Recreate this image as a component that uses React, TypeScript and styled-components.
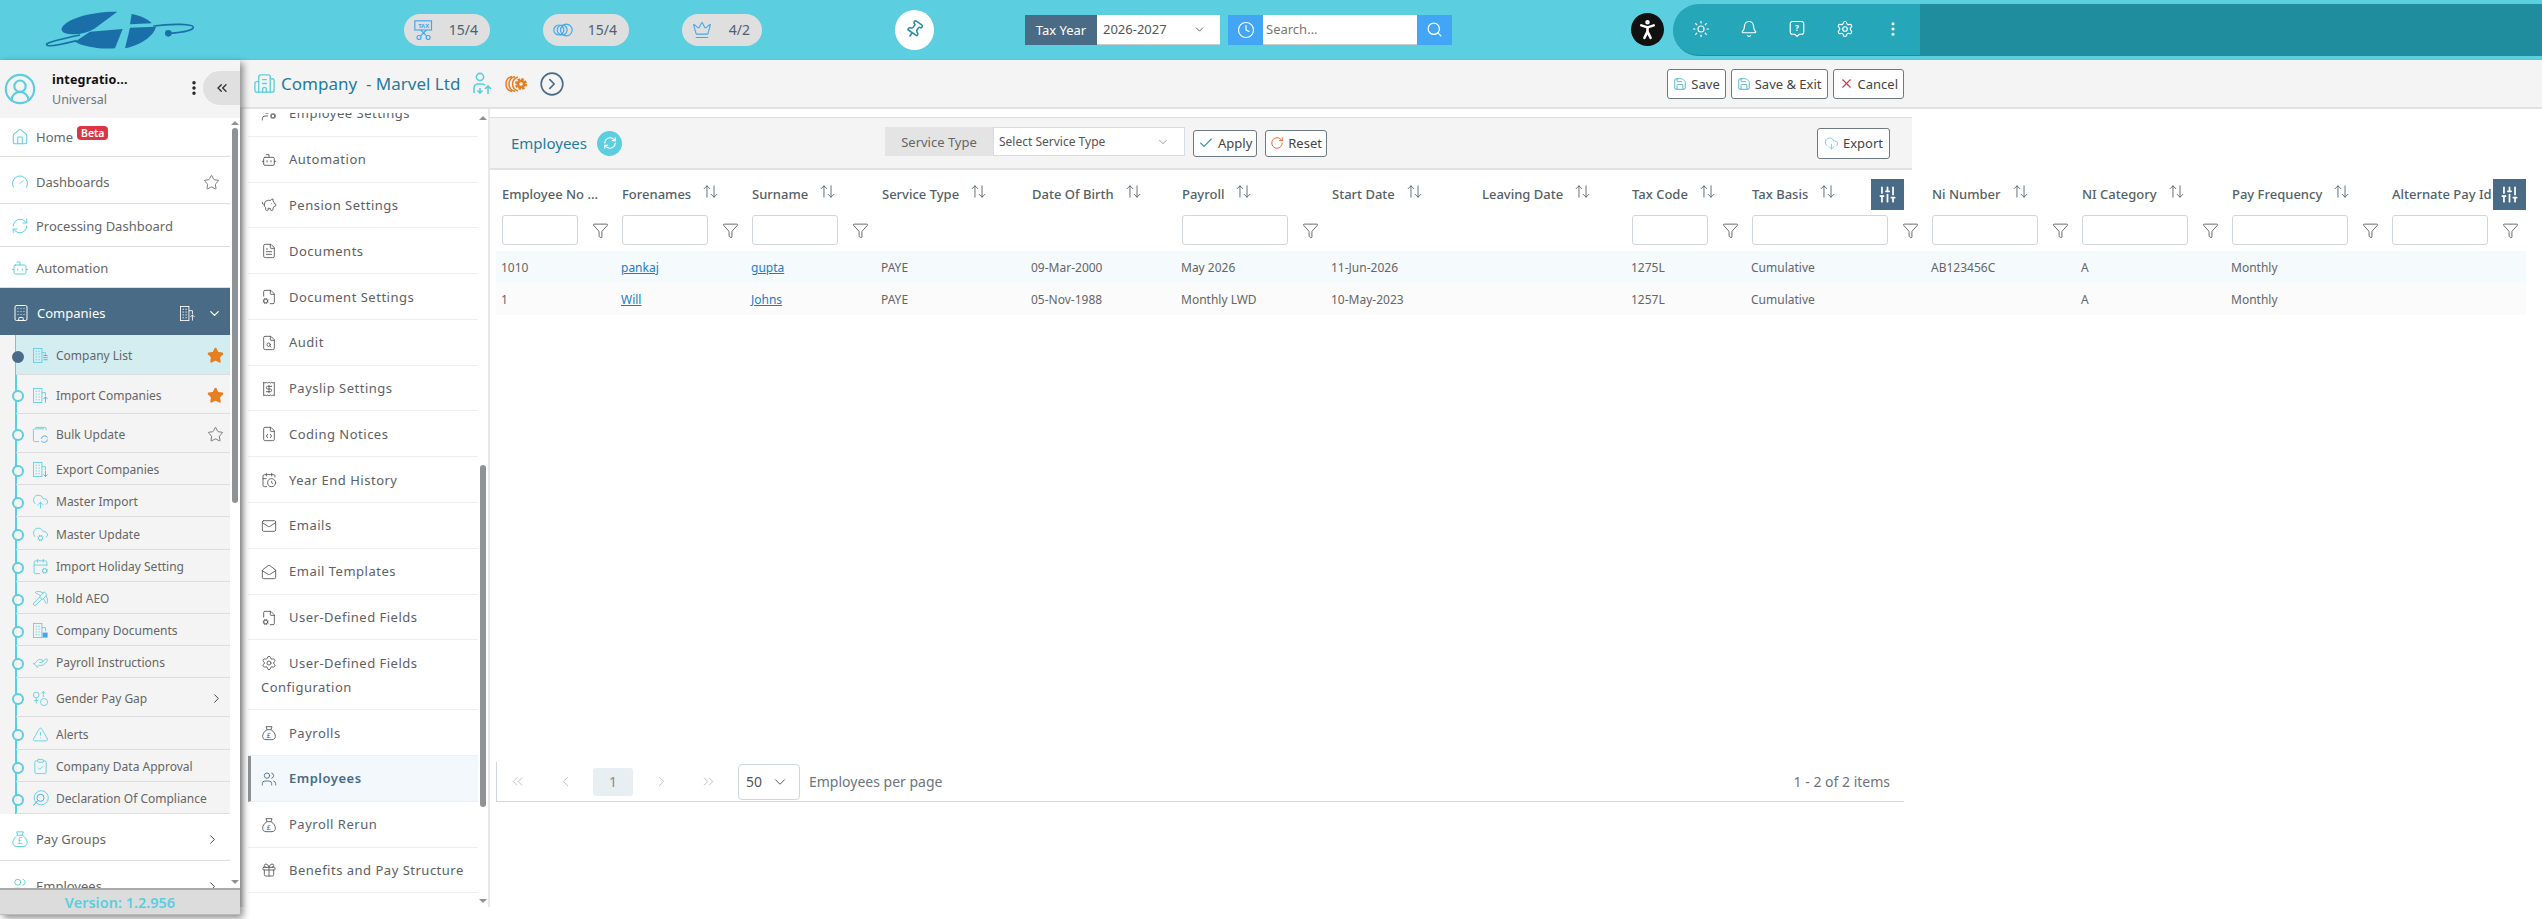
import type { ComponentType, ReactNode } from "react";
import styled, { createGlobalStyle } from "styled-components";
import {
  ArrowUpDown,
  Bell,
  Bot,
  Building,
  Building2,
  CalendarClock,
  CalendarCog,
  Check,
  ChevronDown,
  ChevronLeft,
  ChevronRight,
  ChevronsLeft,
  ChevronsRight,
  CircleChevronRight,
  CircleUserRound,
  ClipboardCheck,
  Clock,
  CloudCog,
  CloudDownload,
  CloudUpload,
  Crown,
  EllipsisVertical,
  FileCode,
  FileCog,
  FileSearch,
  FileText,
  Funnel,
  Gauge,
  Gift,
  HandHelping,
  House,
  Mail,
  MailOpen,
  PersonStanding,
  Pickaxe,
  PiggyBank,
  Pin,
  Receipt,
  RefreshCw,
  RotateCw,
  Save,
  Scale,
  Search,
  Settings,
  SlidersVertical,
  Star,
  Sun,
  TriangleAlert,
  UserCog,
  Users,
  X,
} from "lucide-react";

type IconProps = { size?: number; strokeWidth?: number; color?: string };
type IconType = ComponentType<IconProps>;

const GlobalStyle = createGlobalStyle`
  html, body {
    margin: 0;
    background: #fff;
    height: 919px;
    overflow: hidden;
  }
  * { box-sizing: border-box; }
  body {
    font-family: "Noto Sans", "Open Sans", sans-serif;
    color: #555;
  }
`;

/* small drawn icons the packages don't have */
const Logo = () => (
  <svg width="180" height="60" viewBox="0 0 540 180" fill="#1b6fa8">
    <path d="M95 85C105 60 170 35 262 35L195 85C175 98 150 104 125 103C105 102 93 97 95 85Z" />
    <path d="M305 42C335 48 355 58 365 70L300 73Z" />
    <path d="M135 125L180 95L278 87L255 145C210 148 160 140 135 125Z" />
    <path d="M300 83L378 80C370 110 330 135 285 145Z" />
    <path
      d="M150 105C90 118 45 128 50 135C55 142 100 132 140 122M370 78C430 70 490 72 490 82C490 92 450 98 418 100"
      fill="none"
      stroke="#1b6fa8"
      strokeWidth="5"
    />
    <circle cx="415" cy="100" r="10" />
  </svg>
);

const TaxCut = ({ size = 20 }: IconProps) => (
  <svg width={size} height={size} viewBox="0 0 24 24" fill="none" stroke="#3ea8f5" strokeWidth="1.4">
    <rect x="1" y="1" width="20" height="11" />
    <text x="5" y="9.500" fontSize="7" fontWeight="700" fill="#3ea8f5" stroke="none">
      TAX
    </text>
    <path d="M8 12l7 7M15 12l-7 7" />
    <circle cx="6" cy="21" r="2.400" />
    <circle cx="17" cy="21" r="2.400" />
  </svg>
);

const Rings = ({ size = 20 }: IconProps) => (
  <svg width={size} height={size} viewBox="0 0 24 24" fill="none" stroke="#3ea8f5" strokeWidth="1.4">
    <circle cx="7" cy="12" r="6" />
    <circle cx="11" cy="12" r="6" />
    <circle cx="16" cy="12" r="7" />
  </svg>
);

const HelpBox = ({ size = 18 }: IconProps) => (
  <svg width={size} height={size} viewBox="0 0 24 24" fill="none" stroke="#fff" strokeWidth="1.6">
    <path d="M6 2h12a3 3 0 0 1 3 3v11a3 3 0 0 1-3 3h-3l-3 3-3-3H6a3 3 0 0 1-3-3V5a3 3 0 0 1 3-3z" />
    <text x="12" y="15" fontSize="11" fontWeight="700" fill="#fff" stroke="none" textAnchor="middle">
      ?
    </text>
  </svg>
);

const PersonArrows = () => (
  <svg width="22" height="23" viewBox="0 0 22 23" fill="none" stroke="#5bcedf" strokeWidth="1.6">
    <circle cx="8" cy="5" r="3.600" />
    <path d="M2 21v-5a4 4 0 0 1 4-4h4a4 4 0 0 1 3 1.300" />
    <path d="M8 21v-5M5.500 18.500L8 21l2.500-2.500" />
    <path d="M16 22v-8M13 17l3-3 3 3" />
  </svg>
);

const RingsGear = () => (
  <svg width="23" height="20" viewBox="0 0 23 20" fill="none" stroke="#e67e22" strokeWidth="1.5">
    <path d="M7 2.500C3 3.500 1 6.500 1 10s2 6.500 6 7.500M10 2.500C6 3.500 4 6.500 4 10s2 6.500 6 7.500M13 3C10 4 7.500 6.500 7.500 10s2.500 6 5.500 7" />
    <circle cx="16" cy="10" r="4.500" fill="#e67e22" stroke="#e67e22" strokeWidth="3" strokeDasharray="2.200 1.300" />
    <circle cx="16" cy="10" r="1.800" fill="#f4f4f4" stroke="none" />
  </svg>
);

const makeBuilding = (mark: "lines" | "up" | "down" | "doc") => {
  const BuildingMark = ({ size = 17, color = "#5bcedf" }: IconProps) => {
    const accent = color === "#fff" ? "#fff" : "#3ea8f5";
    return (
      <svg width={size} height={size} viewBox="0 0 24 24" fill="none" stroke={color} strokeWidth="1.2">
        <rect x="2" y="2" width="12" height="20" />
        <path d="M14 8h5v5M5 6h2M9 6h2M5 10h2M9 10h2M5 14h2M9 14h2M5 18h2M9 18h2" />
        {mark === "lines" && <path d="M16 12h6M16 15h6M16 18h6" stroke={accent} />}
        {mark === "up" && <path d="M19 22V14M16 17l3-3 3 3" stroke={accent} />}
        {mark === "down" && <path d="M19 14v8M16 19l3 3 3-3" stroke={accent} />}
        {mark === "doc" && <rect x="15" y="15" width="7" height="7" fill={accent} stroke="none" />}
      </svg>
    );
  };
  return BuildingMark;
};

const BuildingUp = makeBuilding("up");

const MoneyBag = ({ size = 17, color = "#555" }: IconProps) => (
  <svg width={size} height={size} viewBox="0 0 24 24" fill="none" stroke={color} strokeWidth="1.3">
    <path d="M9 7L7.500 2.500h9L15 7M9 7h6M9 7C4 10 2.500 14 2.500 17c0 3 2 5 5 5h9c3 0 5-2 5-5 0-3-1.500-7-6.500-10" />
    <text x="12" y="19" fontSize="11" fill={color} stroke="none" textAnchor="middle">
      £
    </text>
  </svg>
);

const GenderGap = ({ size = 17, color = "#5bcedf" }: IconProps) => (
  <svg width={size} height={size} viewBox="0 0 24 24" fill="none" stroke={color} strokeWidth="1.2">
    <circle cx="6" cy="7" r="4" />
    <path d="M6 11v8M3 15h6" />
    <path d="M16 2v8M13 5l3-3 3 3" />
    <circle cx="17" cy="17" r="5" />
  </svg>
);

const LayersSync = ({ size = 17, color = "#5bcedf" }: IconProps) => (
  <svg width={size} height={size} viewBox="0 0 24 24" fill="none" stroke={color} strokeWidth="1.2">
    <path d="M20 6V4a2 2 0 0 0-2-2H5M10 22H4a2 2 0 0 1-2-2V6a2 2 0 0 1 2-2h13" />
    <path d="M13 18a5 5 0 0 1 9-2M22 19a5 5 0 0 1-9 2" stroke="#3ea8f5" />
  </svg>
);

const SearchRing = ({ size = 17, color = "#5bcedf" }: IconProps) => (
  <svg width={size} height={size} viewBox="0 0 24 24" fill="none" stroke={color} strokeWidth="1.3">
    <circle cx="13" cy="11" r="10" />
    <circle cx="12" cy="11" r="5" stroke="#3ea8f5" />
    <path d="M8 15l-6 7" stroke="#3ea8f5" />
  </svg>
);

const subItems: { label: string; height: number; icon: IconType; star?: "on" | "off"; more?: boolean; active?: boolean }[] = [
  { label: "Company List", height: 40, icon: makeBuilding("lines"), star: "on", active: true },
  { label: "Import Companies", height: 39, icon: makeBuilding("up"), star: "on" },
  { label: "Bulk Update", height: 39, icon: LayersSync, star: "off" },
  { label: "Export Companies", height: 32, icon: makeBuilding("down") },
  { label: "Master Import", height: 32, icon: CloudUpload },
  { label: "Master Update", height: 33, icon: CloudCog },
  { label: "Import Holiday Setting", height: 32, icon: CalendarCog },
  { label: "Hold AEO", height: 32, icon: Pickaxe },
  { label: "Company Documents", height: 32, icon: makeBuilding("doc") },
  { label: "Payroll Instructions", height: 32, icon: HandHelping },
  { label: "Gender Pay Gap", height: 39, icon: GenderGap, more: true },
  { label: "Alerts", height: 33, icon: TriangleAlert },
  { label: "Company Data Approval", height: 32, icon: ClipboardCheck },
  { label: "Declaration Of Compliance", height: 32, icon: SearchRing },
];

const sectionItems: { label: string; icon: IconType; active?: boolean }[] = [
  { label: "Employee Settings", icon: UserCog },
  { label: "Automation", icon: Bot },
  { label: "Pension Settings", icon: PiggyBank },
  { label: "Documents", icon: FileText },
  { label: "Document Settings", icon: FileCog },
  { label: "Audit", icon: FileSearch },
  { label: "Payslip Settings", icon: Receipt },
  { label: "Coding Notices", icon: FileCode },
  { label: "Year End History", icon: CalendarClock },
  { label: "Emails", icon: Mail },
  { label: "Email Templates", icon: MailOpen },
  { label: "User-Defined Fields", icon: FileCog },
  { label: "User-Defined Fields Configuration", icon: Settings },
  { label: "Payrolls", icon: MoneyBag },
  { label: "Employees", icon: Users, active: true },
  { label: "Payroll Rerun", icon: MoneyBag },
  { label: "Benefits and Pay Structure", icon: Gift },
  { label: "Benefit Plan Rules", icon: Scale },
];

const columns: { label: string; width: number; filter?: boolean; noSort?: boolean }[] = [
  { label: "Employee No ...", width: 120, filter: true, noSort: true },
  { label: "Forenames", width: 130, filter: true },
  { label: "Surname", width: 130, filter: true },
  { label: "Service Type", width: 150 },
  { label: "Date Of Birth", width: 150 },
  { label: "Payroll", width: 150, filter: true },
  { label: "Start Date", width: 150 },
  { label: "Leaving Date", width: 150 },
  { label: "Tax Code", width: 120, filter: true },
  { label: "Tax Basis", width: 180, filter: true },
  { label: "Ni Number", width: 150, filter: true },
  { label: "NI Category", width: 150, filter: true },
  { label: "Pay Frequency", width: 160, filter: true },
  { label: "Alternate Pay Id", width: 140, filter: true, noSort: true },
];

const rows: ReactNode[][] = [
  ["1010", <a key="f">pankaj</a>, <a key="s">gupta</a>, "PAYE", "09-Mar-2000", "May 2026", "11-Jun-2026", "", "1275L", "Cumulative", "AB123456C", "A", "Monthly", ""],
  ["1", <a key="f">Will</a>, <a key="s">Johns</a>, "PAYE", "05-Nov-1988", "Monthly LWD", "10-May-2023", "", "1257L", "Cumulative", "", "A", "Monthly", ""],
];

export default function App() {
  return (
    <Page>
      <GlobalStyle />
      <Header>
        <LogoBox>
          <Logo />
        </LogoBox>
        <Stats>
          <StatPill $width={86}>
            <TaxCut size={20} />
            15/4
          </StatPill>
          <StatPill $width={86}>
            <Rings size={20} />
            15/4
          </StatPill>
          <StatPill $width={80}>
            <Crown size={20} strokeWidth={1.3} color="#3ea8f5" />
            4/2
          </StatPill>
        </Stats>
        <PinButton>
          <Pin size={19} strokeWidth={2} color="#2a8fa0" />
        </PinButton>
        <TaxYear>
          <TaxLabel>Tax Year</TaxLabel>
          <TaxSelect>
            2026-2027
            <ChevronDown size={13} strokeWidth={1.6} color="#555" />
          </TaxSelect>
        </TaxYear>
        <SearchGroup>
          <BlueSquare $width={35}>
            <Clock size={18} strokeWidth={1.6} color="#fff" />
          </BlueSquare>
          <SearchBox>Search...</SearchBox>
          <BlueSquare $width={35}>
            <Search size={17} strokeWidth={1.8} color="#fff" />
          </BlueSquare>
        </SearchGroup>
        <A11yButton>
          <PersonStanding size={25} strokeWidth={2.4} color="#fff" />
        </A11yButton>
        <Tray>
          <TrayIcons>
            <Sun size={18} strokeWidth={1.6} color="#fff" />
            <Bell size={18} strokeWidth={1.6} color="#fff" />
            <HelpBox size={18} />
            <Settings size={18} strokeWidth={1.6} color="#fff" />
            <EllipsisVertical size={18} strokeWidth={2.2} color="#fff" />
          </TrayIcons>
          <TrayRest />
        </Tray>
      </Header>

      <Body>
        <Sidebar>
          <UserBlock>
            <CircleUserRound size={34} strokeWidth={1.5} color="#5bcedf" />
            <UserText>
              <UserName>integratio...</UserName>
              <UserRole>Universal</UserRole>
            </UserText>
            <EllipsisVertical size={18} strokeWidth={2.6} color="#222" />
            <CollapseTab>
              <ChevronsLeft size={16} strokeWidth={2} color="#333" />
            </CollapseTab>
          </UserBlock>
          <SideScroll>
            <NavList>
              <NavItem $height={39}>
                <House size={18} strokeWidth={1.4} color="#5bcedf" />
                Home
                <Beta>Beta</Beta>
              </NavItem>
              <NavItem $height={47} $nudge={4}>
                <Gauge size={18} strokeWidth={1.3} color="#5bcedf" />
                Dashboards
                <Trailing>
                  <Star size={17} strokeWidth={1.2} color="#666" />
                </Trailing>
              </NavItem>
              <NavItem $height={43} $nudge={2}>
                <RefreshCw size={18} strokeWidth={1.3} color="#5bcedf" />
                Processing Dashboard
              </NavItem>
              <NavItem $height={41} $nudge={2}>
                <Bot size={18} strokeWidth={1.3} color="#5bcedf" />
                Automation
              </NavItem>
              <CompaniesRow>
                <Building size={18} strokeWidth={1.3} color="#fff" />
                Companies
                <CompanyTools>
                  <BuildingUp size={17} color="#fff" />
                  <ChevronDown size={15} strokeWidth={2} color="#fff" />
                </CompanyTools>
              </CompaniesRow>
              <SubList>
                {subItems.map((item) => {
                  const Glyph = item.icon;
                  return (
                    <SubItem key={item.label} $height={item.height} $active={item.active}>
                      <Glyph size={17} strokeWidth={1.2} color="#5bcedf" />
                      {item.label}
                      {item.star && (
                        <SubTrail>
                          {item.star === "on" ? (
                            <Star size={17} fill="#e67e22" color="#e67e22" />
                          ) : (
                            <Star size={17} strokeWidth={1.2} color="#666" />
                          )}
                        </SubTrail>
                      )}
                      {item.more && (
                        <SubTrail>
                          <ChevronRight size={15} strokeWidth={1.6} color="#444" />
                        </SubTrail>
                      )}
                    </SubItem>
                  );
                })}
              </SubList>
              <NavItem $height={47} $nudge={4}>
                <MoneyBag size={18} color="#5bcedf" />
                Pay Groups
                <Trailing>
                  <ChevronRight size={15} strokeWidth={1.6} color="#444" />
                </Trailing>
              </NavItem>
              <NavItem $height={47} $nudge={4}>
                <Users size={18} strokeWidth={1.3} color="#5bcedf" />
                Employees
                <Trailing>
                  <ChevronRight size={15} strokeWidth={1.6} color="#444" />
                </Trailing>
              </NavItem>
            </NavList>
            <ScrollTrack $width={10}>
              <UpArrow />
              <Thumb $top={3} $height={375} />
              <DownArrow />
            </ScrollTrack>
          </SideScroll>
          <Version>Version: 1.2.956</Version>
        </Sidebar>

        <Workspace>
          <TopBar>
            <Building2 size={23} strokeWidth={1.4} color="#5bcedf" />
            <PageTitle>Company &nbsp;- Marvel Ltd</PageTitle>
            <TitleIcons>
              <PersonArrows />
              <RingsGear />
              <CircleChevronRight size={26} strokeWidth={1.5} color="#4a6b85" />
            </TitleIcons>
            <TopActions>
              <OutlineButton>
                <Save size={14} strokeWidth={1.4} color="#3aa9bb" />
                Save
              </OutlineButton>
              <OutlineButton>
                <Save size={14} strokeWidth={1.4} color="#3aa9bb" />
                Save &amp; Exit
              </OutlineButton>
              <OutlineButton>
                <X size={15} strokeWidth={1.8} color="#dc3545" />
                Cancel
              </OutlineButton>
            </TopActions>
          </TopBar>

          <WorkRow>
            <SectionNav>
              <SectionList>
                <SectionInner>
                  {sectionItems.map((item) => {
                    const Icon = item.icon;
                    return (
                      <SectionItem key={item.label} $active={item.active}>
                        <SectionIcon>
                          <Icon size={16} strokeWidth={1.3} color={item.active ? "#4a6b85" : "#555"} />
                        </SectionIcon>
                        {item.label}
                      </SectionItem>
                    );
                  })}
                </SectionInner>
              </SectionList>
              <ScrollTrack $width={8}>
                <UpArrow />
                <Thumb $top={345} $height={342} />
                <DownArrow />
              </ScrollTrack>
            </SectionNav>

            <Main>
              <CardHeader>
                <CardTitle>Employees</CardTitle>
                <RefreshDot>
                  <RefreshCw size={14} strokeWidth={2} color="#fff" />
                </RefreshDot>
                <FilterGroup>
                  <FilterLabel>Service Type</FilterLabel>
                  <FilterSelect>
                    Select Service Type
                    <ChevronDown size={14} strokeWidth={1.2} color="#777" />
                  </FilterSelect>
                  <SmallButton>
                    <Check size={16} strokeWidth={1.6} color="#2a8fa0" />
                    Apply
                  </SmallButton>
                  <SmallButton>
                    <RotateCw size={14} strokeWidth={1.6} color="#e8622a" />
                    Reset
                  </SmallButton>
                </FilterGroup>
                <ExportButton>
                  <CloudDownload size={15} strokeWidth={1.3} color="#5bcedf" />
                  Export
                </ExportButton>
              </CardHeader>

              <TableWrap>
                <Grid>
                  <colgroup>
                    {columns.map((col) => (
                      <col key={col.label} width={col.width} />
                    ))}
                  </colgroup>
                  <thead>
                    <tr>
                      {columns.map((col) => (
                        <HeadCell key={col.label}>
                          <HeadInner>
                            {col.label}
                            {!col.noSort && <ArrowUpDown size={17} strokeWidth={1.2} color="#4a5a66" />}
                          </HeadInner>
                        </HeadCell>
                      ))}
                    </tr>
                    <tr>
                      {columns.map((col) => (
                        <FilterCell key={col.label}>
                          {col.filter && (
                            <FilterInner>
                              <FilterInput />
                              <FunnelSlot>
                                <Funnel size={17} strokeWidth={1.1} color="#444" />
                              </FunnelSlot>
                            </FilterInner>
                          )}
                        </FilterCell>
                      ))}
                    </tr>
                  </thead>
                  <tbody>
                    {rows.map((row, i) => (
                      <DataRow key={i} $odd={i % 2 === 0}>
                        {row.map((cell, j) => (
                          <DataCell key={j}>{cell}</DataCell>
                        ))}
                      </DataRow>
                    ))}
                  </tbody>
                </Grid>
                <ColumnMenu $left={1375}>
                  <SlidersVertical size={19} strokeWidth={2.2} color="#fff" />
                </ColumnMenu>
                <ColumnMenu $left={1997}>
                  <SlidersVertical size={19} strokeWidth={2.2} color="#fff" />
                </ColumnMenu>
              </TableWrap>

              <Pager>
                <PagerArrow $width={40}>
                  <ChevronsLeft size={17} strokeWidth={1.1} color="#a9b2b8" />
                </PagerArrow>
                <PagerArrow $width={56}>
                  <ChevronLeft size={17} strokeWidth={1.1} color="#a9b2b8" />
                </PagerArrow>
                <PageNumber>1</PageNumber>
                <PagerArrow $width={56}>
                  <ChevronRight size={17} strokeWidth={1.1} color="#a9b2b8" />
                </PagerArrow>
                <PagerArrow $width={38}>
                  <ChevronsRight size={17} strokeWidth={1.1} color="#a9b2b8" />
                </PagerArrow>
                <PageSize>
                  50
                  <ChevronDown size={18} strokeWidth={1.3} color="#555" />
                </PageSize>
                <PagerText>Employees per page</PagerText>
                <PagerCount>1 - 2 of 2 items</PagerCount>
              </Pager>
            </Main>
          </WorkRow>
        </Workspace>
      </Body>
    </Page>
  );
}

const Page = styled.div`
  width: 2542px;
  height: 919px;
  overflow: hidden;
  display: flex;
  flex-direction: column;
`;

const Header = styled.header`
  height: 60px;
  flex: none;
  background: #5bcedf;
  border-bottom: 1px solid #62c1d0;
  display: flex;
  align-items: center;
  padding-left: 30px;
`;

const LogoBox = styled.div`
  width: 180px;
  height: 60px;
  flex: none;
`;

const Stats = styled.div`
  margin-left: 194px;
  display: flex;
  gap: 53px;
`;

const StatPill = styled.div<{ $width: number }>`
  width: ${(p) => p.$width}px;
  height: 32px;
  border-radius: 16px;
  background: #dfdfdf;
  display: flex;
  align-items: center;
  justify-content: space-between;
  padding: 0 12px 0 10px;
  font-size: 14px;
  color: #4f5f6e;
`;

const PinButton = styled.div`
  margin-left: 133px;
  width: 39px;
  height: 40px;
  border-radius: 50%;
  background: #fff;
  display: flex;
  align-items: center;
  justify-content: center;
  svg {
    transform: rotate(35deg);
  }
`;

const TaxYear = styled.div`
  margin-left: 91px;
  display: flex;
  height: 30px;
`;

const TaxLabel = styled.div`
  width: 72px;
  background: #4a6b85;
  color: #fff;
  font-size: 13px;
  display: flex;
  align-items: center;
  justify-content: center;
`;

const TaxSelect = styled.div`
  width: 123px;
  background: #fff;
  font-size: 13px;
  color: #555;
  display: flex;
  align-items: center;
  justify-content: space-between;
  padding: 0 14px 0 6px;
  border-bottom: 1px solid #ccc;
`;

const SearchGroup = styled.div`
  margin-left: 8px;
  display: flex;
  height: 30px;
`;

const BlueSquare = styled.div<{ $width: number }>`
  width: ${(p) => p.$width}px;
  background: #42a5f5;
  display: flex;
  align-items: center;
  justify-content: center;
`;

const SearchBox = styled.div`
  width: 154px;
  background: #fff;
  font-size: 13px;
  color: #777;
  display: flex;
  align-items: center;
  padding-left: 3px;
  border-bottom: 1px solid #ccc;
`;

const A11yButton = styled.div`
  margin-left: 179px;
  width: 33px;
  height: 33px;
  border-radius: 50%;
  background: #111;
  display: flex;
  align-items: center;
  justify-content: center;
`;

const Tray = styled.div`
  margin-left: 9px;
  flex: 1;
  height: 52px;
  display: flex;
`;

const TrayIcons = styled.div`
  width: 247px;
  background: #25a6b9;
  border-radius: 26px 0 0 26px;
  border-bottom: 1px solid #1f8c9f;
  display: flex;
  align-items: center;
  justify-content: space-between;
  padding: 0 18px 0 19px;
`;

const TrayRest = styled.div`
  flex: 1;
  background: #208d9e;
`;

const Body = styled.div`
  flex: 1;
  display: flex;
  min-height: 0;
`;

const Sidebar = styled.aside`
  width: 240px;
  height: 855px;
  flex: none;
  display: flex;
  flex-direction: column;
  background: #fff;
  box-shadow: 3px 3px 7px rgba(0, 0, 0, 0.45);
  position: relative;
  z-index: 2;
`;

const UserBlock = styled.div`
  height: 58px;
  flex: none;
  background: #f4f4f4;
  display: flex;
  align-items: center;
  padding-left: 3px;
  > svg:nth-of-type(2) {
    margin-left: auto;
    margin-top: -2px;
  }
`;

const UserText = styled.div`
  margin-left: 15px;
  display: flex;
  flex-direction: column;
  gap: 3px;
`;

const UserName = styled.div`
  font-size: 12.5px;
  font-weight: 700;
  letter-spacing: 0.2px;
  color: #111;
`;

const UserRole = styled.div`
  font-size: 12.5px;
  color: #6d757c;
`;

const CollapseTab = styled.div`
  width: 37px;
  height: 34px;
  margin-top: -2px;
  border-radius: 17px 0 0 17px;
  background: #e0e0e0;
  display: flex;
  align-items: center;
  justify-content: center;
`;

const SideScroll = styled.div`
  flex: 1;
  min-height: 0;
  display: flex;
`;

const NavList = styled.nav`
  width: 230px;
  flex: none;
  overflow: hidden;
`;

const NavItem = styled.div<{ $height: number; $nudge?: number }>`
  height: ${(p) => p.$height}px;
  display: flex;
  align-items: center;
  gap: 7px;
  padding: ${(p) => p.$nudge ?? 0}px 10px 0 11px;
  font-size: 13px;
  color: #666;
  border-bottom: 1px solid #ddd;
`;

const Beta = styled.span`
  align-self: flex-start;
  margin: 8px 0 0 -3px;
  padding: 0 4px;
  height: 14px;
  line-height: 14px;
  border-radius: 4px;
  background: #dc3545;
  color: #fff;
  font-size: 10.5px;
  font-weight: 600;
`;

const Trailing = styled.span`
  margin-left: auto;
  display: flex;
`;

const CompaniesRow = styled.div`
  height: 47px;
  display: flex;
  align-items: center;
  gap: 7px;
  padding: 3px 8px 0 12px;
  background: #4a6b85;
  color: #fff;
  font-size: 13px;
`;

const CompanyTools = styled.span`
  margin-left: auto;
  display: flex;
  align-items: center;
  gap: 11px;
`;

const SubList = styled.div`
  position: relative;
  background: #f4f4f4;
  &::before {
    content: "";
    position: absolute;
    left: 15px;
    top: 0;
    bottom: 0;
    width: 2px;
    background: #5bcedf;
  }
`;

const SubItem = styled.div<{ $height: number; $active?: boolean }>`
  position: relative;
  height: ${(p) => p.$height}px;
  margin-left: 16px;
  padding: 2px 6px 0 16px;
  display: flex;
  align-items: center;
  gap: 7px;
  font-size: 12px;
  color: #666;
  border-bottom: 1px solid #ddd;
  background: ${(p) => (p.$active ? "#d4edf1" : "transparent")};
  &::before {
    content: "";
    position: absolute;
    left: -4px;
    top: calc(50% - 4px);
    width: 8px;
    height: 8px;
    border-radius: 50%;
    border: 2px solid ${(p) => (p.$active ? "#4a6b85" : "#5bcedf")};
    background: ${(p) => (p.$active ? "#4a6b85" : "#f4f4f4")};
  }
`;

const SubTrail = styled.span`
  margin-left: auto;
  display: flex;
`;

const ScrollTrack = styled.div<{ $width: number }>`
  width: ${(p) => p.$width}px;
  flex: none;
  display: flex;
  flex-direction: column;
  align-items: center;
  padding: 2px 0 4px;
`;

const UpArrow = styled.div`
  width: 0;
  height: 0;
  flex: none;
  margin-top: 1px;
  border-left: 4px solid transparent;
  border-right: 4px solid transparent;
  border-bottom: 4px solid #8f9396;
`;

const DownArrow = styled.div`
  width: 0;
  height: 0;
  flex: none;
  margin-top: auto;
  border-left: 4px solid transparent;
  border-right: 4px solid transparent;
  border-top: 4px solid #8f9396;
`;

const Thumb = styled.div<{ $top: number; $height: number }>`
  width: 6px;
  height: ${(p) => p.$height}px;
  margin-top: ${(p) => p.$top}px;
  border-radius: 3px;
  background: #8f9396;
`;

const Version = styled.div`
  height: 27px;
  flex: none;
  background: #dcdcdc;
  border-top: 2px solid #aaa;
  border-bottom: 1px solid #bbb;
  display: flex;
  align-items: center;
  justify-content: center;
  color: #5bcedf;
  font-size: 14.5px;
  font-weight: 600;
`;

const Workspace = styled.div`
  flex: 1;
  min-width: 0;
  display: flex;
  flex-direction: column;
`;

const TopBar = styled.div`
  height: 49px;
  flex: none;
  background: #f4f4f4;
  border-bottom: 2px solid #e2e2e2;
  display: flex;
  align-items: center;
  padding-left: 13px;
`;

const PageTitle = styled.div`
  margin-left: 5px;
  font-size: 17px;
  color: #1f7ca0;
`;

const TitleIcons = styled.div`
  margin-left: 12px;
  display: flex;
  align-items: center;
  gap: 11px;
`;

const TopActions = styled.div`
  margin-left: auto;
  margin-right: 638px;
  display: flex;
  gap: 5px;
`;

const OutlineButton = styled.button`
  height: 30px;
  padding: 0 5px;
  display: flex;
  align-items: center;
  gap: 4px;
  background: #fff;
  border: 1px solid #6d7a82;
  border-radius: 3px;
  font: inherit;
  font-size: 13px;
  color: #444;
`;

const SmallButton = styled(OutlineButton)`
  height: 27px;
  padding: 0 4px;
`;

const WorkRow = styled.div`
  flex: 1;
  min-height: 0;
  display: flex;
`;

const SectionNav = styled.div`
  width: 250px;
  height: 798px;
  flex: none;
  padding: 4px 2px 0 8px;
  display: flex;
  gap: 1px;
  border-right: 2px solid #e8e8e8;
  box-shadow: inset 6px 0 5px -4px rgba(0, 0, 0, 0.18);
`;

const SectionList = styled.div`
  width: 230px;
  flex: none;
  overflow: hidden;
`;

const SectionInner = styled.div`
  margin-top: -22px;
`;

const SectionItem = styled.div<{ $active?: boolean }>`
  padding: 10.4px 13px;
  padding-left: ${(p) => (p.$active ? "10px" : "13px")};
  line-height: 24px;
  font-size: 13px;
  letter-spacing: 0.5px;
  font-weight: ${(p) => (p.$active ? 600 : 400)};
  color: ${(p) => (p.$active ? "#4a6b85" : "#5c6166")};
  border-bottom: 1px solid #eee;
  background: ${(p) => (p.$active ? "#f2f8fb" : "#fff")};
  border-left: ${(p) => (p.$active ? "3px solid #8f9396" : "none")};
`;

const SectionIcon = styled.span`
  display: inline-block;
  width: 28px;
  vertical-align: middle;
  line-height: 0;
  margin-top: -2px;
`;

const Main = styled.main`
  flex: 1;
  min-width: 0;
  overflow: hidden;
  padding-top: 8px;
  display: flex;
  flex-direction: column;
  align-items: flex-start;
`;

const CardHeader = styled.div`
  width: 1422px;
  height: 53px;
  flex: none;
  background: #f4f4f4;
  border-top: 1px solid #ddd;
  border-bottom: 2px solid #e2e2e2;
  display: flex;
  align-items: center;
  padding: 0 22px 0 21px;
`;

const CardTitle = styled.div`
  font-size: 15px;
  color: #1f7ca0;
`;

const RefreshDot = styled.div`
  margin-left: 10px;
  width: 25px;
  height: 25px;
  border-radius: 50%;
  background: #5bcedf;
  display: flex;
  align-items: center;
  justify-content: center;
`;

const FilterGroup = styled.div`
  margin-left: 263px;
  display: flex;
  align-items: center;
  gap: 8px;
`;

const FilterLabel = styled.div`
  width: 108px;
  height: 29px;
  margin-right: -8px;
  margin-top: -3px;
  background: #e4e4e4;
  font-size: 13px;
  color: #666;
  display: flex;
  align-items: center;
  justify-content: center;
`;

const FilterSelect = styled.div`
  width: 192px;
  height: 29px;
  margin-top: -3px;
  background: #fff;
  border: 1px solid #d5dce2;
  font-size: 12px;
  color: #555;
  display: flex;
  align-items: center;
  justify-content: space-between;
  padding: 0 14px 0 5px;
`;

const ExportButton = styled(OutlineButton)`
  margin-left: auto;
  height: 31px;
  padding: 0 6px;
`;

const TableWrap = styled.div`
  position: relative;
  margin-left: 6px;
  flex: none;
`;

const Grid = styled.table`
  width: 2030px;
  table-layout: fixed;
  border-collapse: collapse;
`;

const HeadCell = styled.th`
  height: 45px;
  padding: 2px 0 0 6px;
  text-align: left;
  font-size: 13px;
  font-weight: 500;
  color: #555f68;
  white-space: nowrap;
  overflow: hidden;
`;

const HeadInner = styled.div`
  display: flex;
  align-items: center;
  gap: 11px;
  svg {
    margin-top: -5px;
    flex: none;
  }
`;

const FilterCell = styled.th`
  height: 36px;
  padding: 0 0 6px 6px;
  font-weight: 400;
`;

const FilterInner = styled.div`
  display: flex;
  align-items: center;
`;

const FilterInput = styled.input`
  width: calc(100% - 38px);
  height: 30px;
  background: #fff;
  border: 1px solid #cfd6dc;
  border-radius: 3px;
`;

const FunnelSlot = styled.span`
  margin-left: 14px;
  display: flex;
`;

const DataRow = styled.tr<{ $odd: boolean }>`
  height: 32px;
  background: ${(p) => (p.$odd ? "#f5fafc" : "#fbfbfb")};
`;

const DataCell = styled.td`
  padding: 1px 0 0 5px;
  font-size: 12px;
  color: #666;
  white-space: nowrap;
  a {
    color: #1a7ec8;
    text-decoration: underline;
  }
`;

const ColumnMenu = styled.div<{ $left: number }>`
  position: absolute;
  top: 9px;
  left: ${(p) => p.$left}px;
  width: 33px;
  height: 31px;
  background: #4a6b85;
  display: flex;
  align-items: center;
  justify-content: center;
`;

const Pager = styled.div`
  margin: 447px 0 0 6px;
  width: 1408px;
  height: 40px;
  flex: none;
  border-left: 1px solid #cfd6dc;
  border-bottom: 1px solid #cfd6dc;
  display: flex;
  align-items: center;
  font-size: 14px;
  color: #6d757c;
`;

const PagerArrow = styled.div<{ $width: number }>`
  width: ${(p) => p.$width}px;
  flex: none;
  display: flex;
  align-items: center;
  justify-content: center;
`;

const PageNumber = styled.div`
  width: 40px;
  height: 28px;
  border-radius: 3px;
  background: #e8eff2;
  color: #888;
  display: flex;
  align-items: center;
  justify-content: center;
`;

const PageSize = styled.div`
  margin-left: 11px;
  width: 62px;
  height: 36px;
  border: 1px solid #cfd6dc;
  border-radius: 4px;
  display: flex;
  align-items: center;
  justify-content: space-between;
  padding: 0 10px 0 7px;
  color: #555;
`;

const PagerText = styled.div`
  margin-left: 9px;
`;

const PagerCount = styled.div`
  margin-left: auto;
  margin-right: 14px;
`;
